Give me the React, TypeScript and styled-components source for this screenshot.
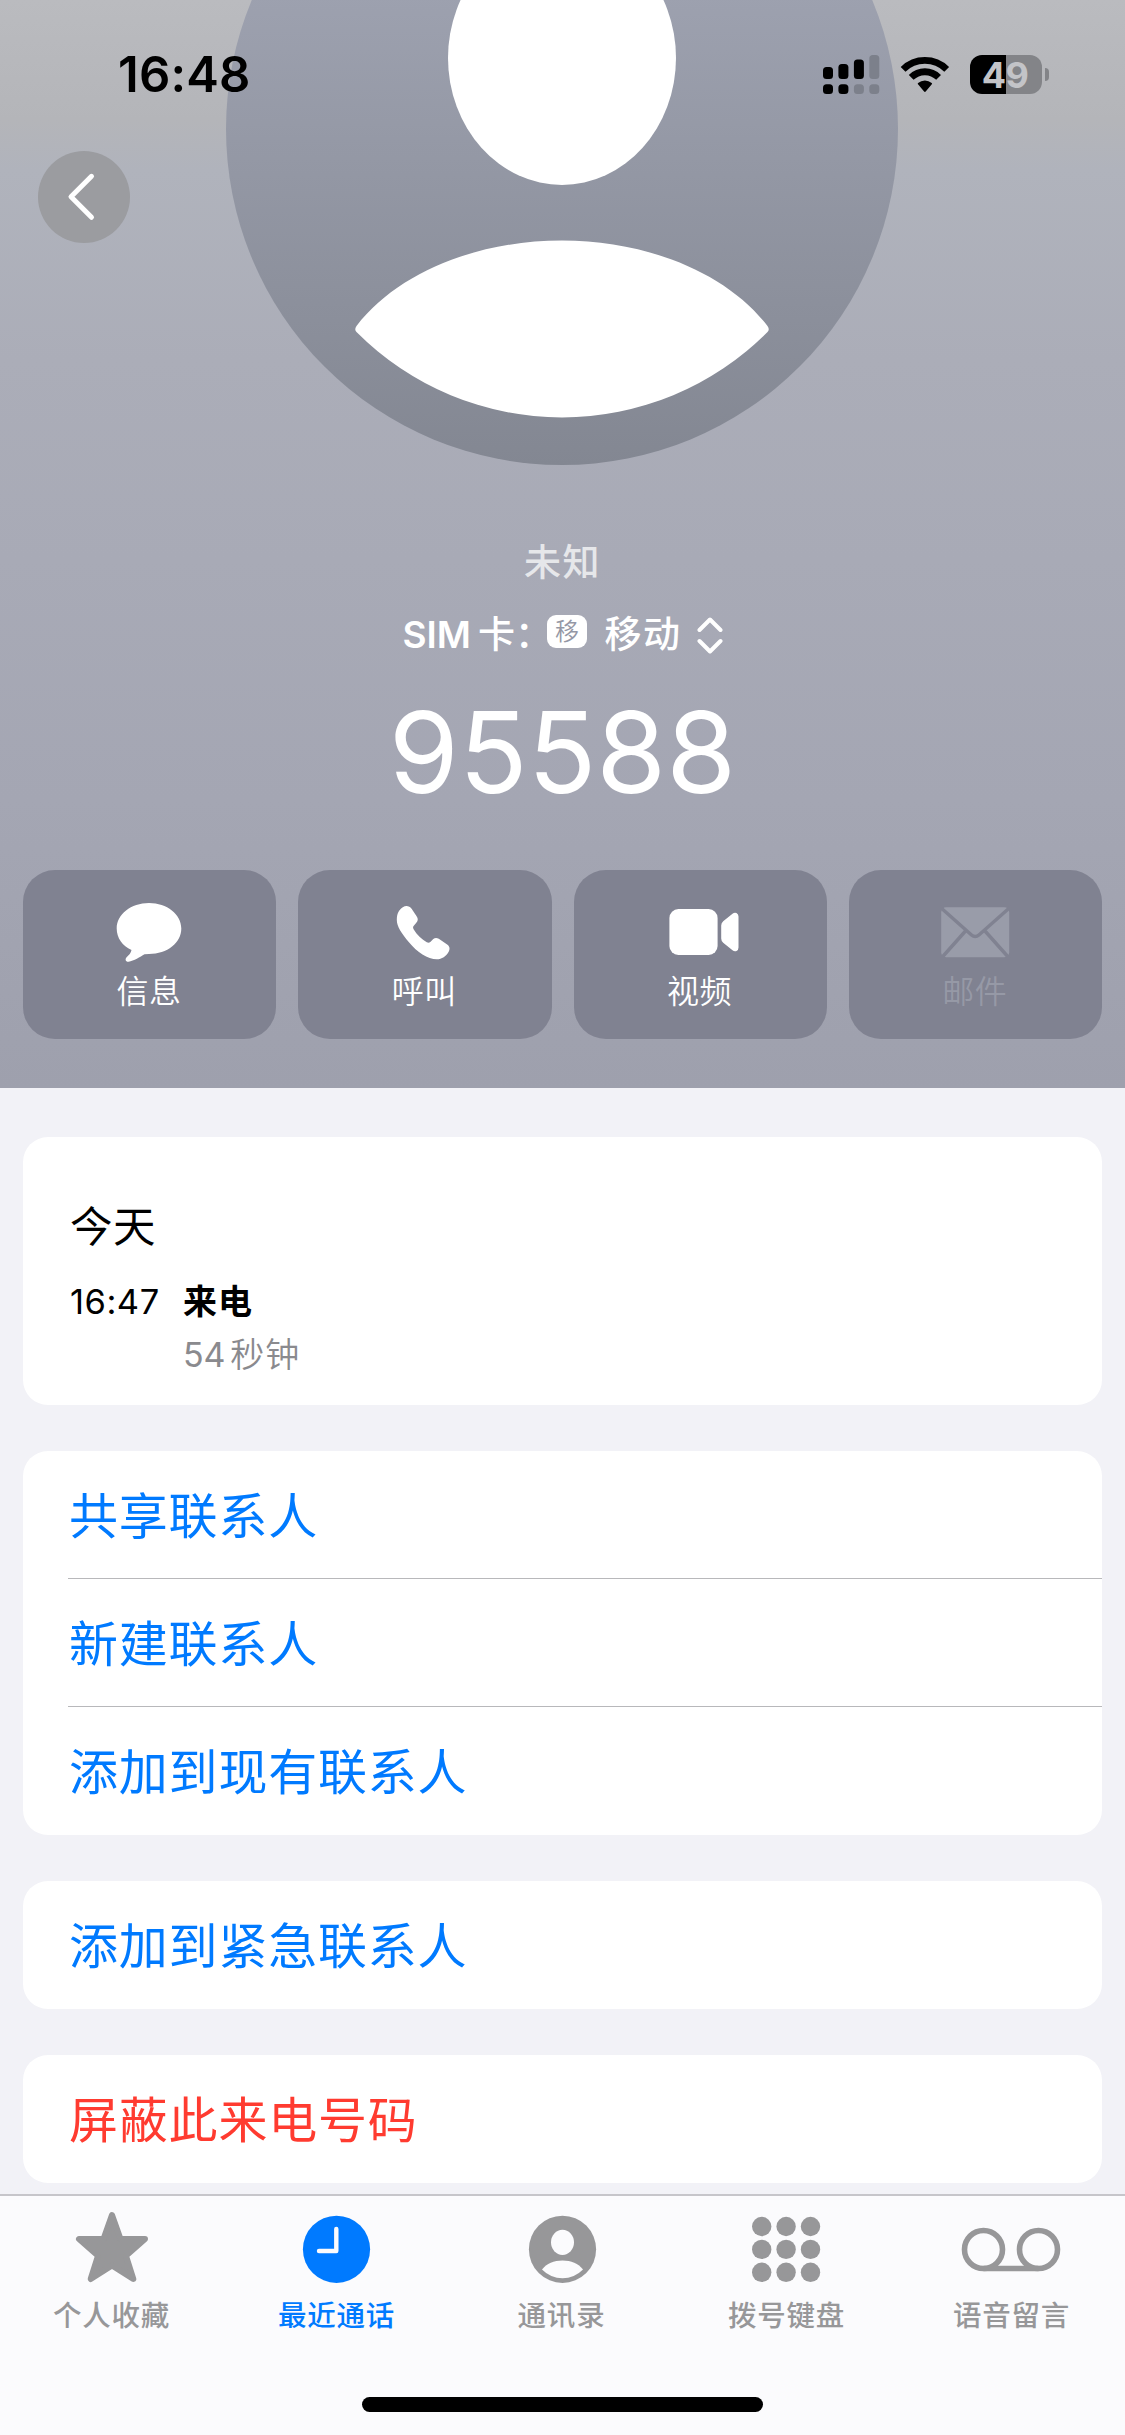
import React from "react";
import styled, { createGlobalStyle } from "styled-components";

const GlobalStyle = createGlobalStyle`
  *, *::before, *::after { box-sizing: border-box; }
  body {
    margin: 0;
    background: #f2f2f7;
    font-family: Inter, "Noto Sans CJK SC", sans-serif;
    -webkit-font-smoothing: antialiased;
  }
  button { font-family: inherit; border: 0; padding: 0; margin: 0; background: none; }
`;

const Screen = styled.div`
  width: 1125px;
  height: 2435px;
  display: flex;
  flex-direction: column;
  overflow: hidden;
  background: #f2f2f7;
`;

const Header = styled.header`
  position: relative;
  height: 1088px;
  flex: none;
  display: flex;
  flex-direction: column;
  overflow: hidden;
  background: linear-gradient(
    180deg,
    #babbbf 0,
    #b4b5b9 120px,
    #b0b3bc 170px,
    #abadb8 360px,
    #a8aab6 560px,
    #a4a6b3 800px,
    #9ea0ad 1088px
  );
`;

const Avatar = styled.svg`
  position: absolute;
  left: 226px;
  top: -207.5px;
  width: 672px;
  height: 672px;
`;

const StatusBar = styled.div`
  position: relative;
  height: 151px;
  padding: 0 76px 0 118px;
  display: flex;
  justify-content: space-between;
`;

const Clock = styled.span`
  margin-top: 45px;
  height: 60px;
  line-height: 60px;
  font-size: 49px;
  font-weight: 600;
  letter-spacing: 0.2px;
  color: #000;
`;

const Indicators = styled.div`
  display: flex;
  margin-top: 55px;
  height: 39px;
`;

const SignalIcon = styled.svg`
  width: 57px;
  height: 39px;
`;

const WifiIcon = styled.svg`
  width: 50px;
  height: 39px;
  margin-left: 20px;
`;

const Battery = styled.div`
  display: flex;
  align-items: center;
  gap: 3px;
  margin-left: 20px;
`;

const BatteryBody = styled.div<{ $level: number }>`
  width: 72px;
  height: 39px;
  padding-right: 2px;
  border-radius: 12px;
  background: linear-gradient(90deg, #000 ${(p) => p.$level}%, #838488 ${(p) => p.$level}%);
  color: #c3c4c8;
  font-size: 36px;
  font-weight: 700;
  line-height: 40px;
  text-align: center;
  letter-spacing: -0.5px;
`;

const BatteryTip = styled.div`
  width: 4px;
  height: 13px;
  border-radius: 0 5px 5px 0;
  background: #838488;
`;

const NavRow = styled.div`
  position: relative;
  height: 93px;
  padding-left: 37.5px;
`;

const BackButton = styled.button`
  width: 92px;
  height: 92px;
  border-radius: 50%;
  display: flex;
  align-items: center;
  justify-content: center;
  background: #9b9ca0;
`;

const Identity = styled.div`
  margin-top: 294px;
  display: flex;
  flex-direction: column;
  align-items: center;
`;

const Caption = styled.div`
  height: 50px;
  line-height: 50px;
  font-size: 37px;
  font-weight: 500;
  letter-spacing: 1.5px;
  color: #e6e7ea;
`;

const SimRow = styled.div`
  margin-top: 21px;
  height: 51px;
  display: flex;
  align-items: center;
  color: #fff;
  font-size: 37px;
  font-weight: 600;
  line-height: 50px;
`;

const SimLabel = styled.span`
  width: 144.5px;
  white-space: nowrap;
`;

const SimCard = styled.span`
  margin-left: 7px;
  font-size: 37px;
  font-weight: 500;
`;

const SimBadge = styled.span`
  width: 40px;
  height: 33px;
  margin-top: -7px;
  border-radius: 9px;
  background: #fff;
  color: #9497a5;
  font-size: 24px;
  font-weight: 350;
  line-height: 33px;
  text-align: center;
`;

const SimName = styled.span`
  margin-left: 17.5px;
  width: 92px;
  font-size: 37px;
  font-weight: 500;
  letter-spacing: 1.5px;
`;

const PhoneNumber = styled.div`
  margin-top: 32px;
  height: 120px;
  line-height: 120px;
  font-size: 113px;
  font-weight: 400;
  color: #fff;
`;

const Actions = styled.div`
  margin-top: 58px;
  padding: 0 23px;
  display: grid;
  grid-template-columns: repeat(4, 1fr);
  gap: 22px;
`;

const ActionButton = styled.button<{ $disabled?: boolean }>`
  height: 169px;
  border-radius: 32px;
  background: #808291;
  display: flex;
  flex-direction: column;
  align-items: center;
  color: ${(p) => (p.$disabled ? "#999ca9" : "#fff")};
`;

const ActionIcon = styled.svg`
  width: 74px;
  height: 64px;
  margin-top: 31px;
  margin-right: 1px;
  fill: currentColor;
`;

const ActionLabel = styled.span<{ $disabled?: boolean }>`
  height: 44px;
  margin-top: 5px;
  line-height: 44px;
  font-size: 32px;
  font-weight: 350;
  letter-spacing: 0.6px;
  padding-right: 1px;
  opacity: ${(p) => (p.$disabled ? 0.9 : 1)};
`;

const Content = styled.main`
  height: 1106px;
  flex: none;
  padding: 49px 23px 0;
  display: flex;
  flex-direction: column;
  gap: 46px;
  overflow: hidden;
`;

const Card = styled.section`
  flex: none;
  border-radius: 25px;
  background: #fff;
  overflow: hidden;
`;

const CallLog = styled(Card)`
  height: 268px;
  padding: 60px 47px 0;
  color: #000;
`;

const Day = styled.div`
  height: 60px;
  line-height: 60px;
  font-size: 42.5px;
  font-weight: 400;
  letter-spacing: 0.6px;
`;

const CallGrid = styled.div`
  margin-top: 18px;
  display: grid;
  grid-template-columns: 113px 1fr;
  grid-auto-rows: 53px;
  line-height: 53px;
  font-size: 34px;
`;

const CallTime = styled.span`
  font-size: 34.5px;
  letter-spacing: 0.5px;
`;

const CallKind = styled.span`
  font-weight: 700;
  letter-spacing: 1px;
`;

const CallLength = styled.span`
  grid-column: 2;
  display: flex;
  gap: 5px;
  font-weight: 350;
  letter-spacing: 1px;
  color: #8a8a8e;
`;

const Seconds = styled.span`
  font-weight: 400;
  letter-spacing: -0.2px;
`;

const Row = styled.button<{ $danger?: boolean }>`
  display: flex;
  align-items: center;
  width: 100%;
  height: 128px;
  padding: 0 0 5px 46px;
  font-size: 49px;
  font-weight: 400;
  letter-spacing: 0.8px;
  color: ${(p) => (p.$danger ? "#ff3b30" : "#007aff")};
`;

const Divider = styled.hr`
  height: 1px;
  margin: -1px 0 0 45px;
  border: 0;
  background: #b8b8bb;
`;

const TabBar = styled.nav`
  flex: 1;
  display: flex;
  flex-direction: column;
  align-items: center;
  justify-content: space-between;
  border-top: 2px solid #c6c5ca;
  background: #fbfbfd;
  padding-bottom: 23px;
`;

const Tabs = styled.div`
  width: 100%;
  display: grid;
  grid-template-columns: repeat(5, 1fr);
`;

const Tab = styled.button<{ $active?: boolean }>`
  display: flex;
  flex-direction: column;
  align-items: center;
  padding-right: 2px;
  color: ${(p) => (p.$active ? "#007aff" : "#979799")};
`;

const TabIcon = styled.svg`
  width: 104px;
  height: 80px;
  margin-top: 12px;
  fill: currentColor;
`;

const TabLabel = styled.span`
  height: 40px;
  margin-top: 8px;
  line-height: 40px;
  font-size: 28.5px;
  font-weight: 500;
  letter-spacing: 0.8px;
`;

const HomeIndicator = styled.div`
  width: 401px;
  height: 15px;
  border-radius: 8px;
  background: #000;
`;

const actions = [
  {
    label: "信息",
    icon: (
      <path d="M37 2C55 2 69.3 13.3 69.3 27.5C69.3 41.7 55.5 53 37 53Q34.5 53 32.5 53.3C28 56 22 60 16.5 60.8C13.5 61 12.8 58.3 14.6 56.3C17 54 19 52 19.5 49C10.500 45 4.7 37 4.7 27.5C4.7 13.3 19 2 37 2Z" />
    ),
  },
  {
    label: "呼叫",
    icon: (
      <path
        transform="translate(9.8 4.7)"
        d="M0 14C0 8 2 4 6 1.5C9 -.3 12.5 0 14.8 3L19.8 10.5C21.5 13 21.3 15 19.5 17L16.8 20.3C16 21.3 16.2 22.3 16.8 23.5C20 29 25 33.5 30 36.5C31.5 37.3 32.5 37 33.5 36.2L36.5 33.3C38 32 40 32 42 33L50 38.5C53 40.5 53.3 43 52 45.7C49.5 50.5 45 53.5 40 53.5C31 53.5 20 46 12.6 37C5 28 0 21 0 14Z"
      />
    ),
  },
  {
    label: "视频",
    icon: (
      <>
        <rect x="6.4" y="8" width="48.2" height="46" rx="9" />
        <path d="M58.2 24.5Q58.2 22 60.2 20.3L69.5 12.7Q71.5 11 73.5 12Q75.5 13 75.5 15.5V46.5Q75.5 49 73.5 50Q71.5 51 69.5 49.3L60.2 41.7Q58.2 40 58.2 37.5Z" />
      </>
    ),
  },
  {
    label: "邮件",
    disabled: true,
    icon: (
      <>
        <rect x="3.2" y="6.3" width="68" height="50" rx="5" />
        <path
          d="M1.5 5.5L33.5 34Q37.2 37.2 40.9 34L73 5.5M3 57.5L27.5 30M71.5 57.5L47 30"
          fill="none"
          stroke="#808291"
          strokeWidth="3.4"
        />
      </>
    ),
  },
];

const groups = [
  ["共享联系人", "新建联系人", "添加到现有联系人"],
  ["添加到紧急联系人"],
  ["屏蔽此来电号码"],
];

const dots = [0, 1, 2];

const tabs = [
  {
    label: "个人收藏",
    icon: (
      <path
        d="M52 7L60.5 31H85L66 47.8L73.300 71L52 57.5L30.7 71L38 47.8L19 31H43.5Z"
        stroke="currentColor"
        strokeWidth="6"
        strokeLinejoin="round"
      />
    ),
  },
  {
    label: "最近通话",
    active: true,
    icon: (
      <>
        <circle cx="51.5" cy="41.3" r="33.6" />
        <path d="M51.3 21V43H34" fill="none" stroke="#fbfbfd" strokeWidth="4.4" strokeLinecap="round" strokeLinejoin="round" />
      </>
    ),
  },
  {
    label: "通讯录",
    icon: (
      <>
        <circle cx="52.5" cy="41.3" r="33.6" />
        <ellipse cx="52.5" cy="34.3" rx="11.5" ry="12.6" fill="#fbfbfd" />
        <path d="M32 61.5C36.500 55.5 44 52.5 52.5 52.5S68.5 55.5 73 61.5A28.5 28.5 0 0 1 32 61.5Z" fill="#fbfbfd" />
      </>
    ),
  },
  {
    label: "拨号键盘",
    icon: dots.map((col) =>
      dots.map((row) => (
        <circle key={`${col}-${row}`} cx={26.7 + col * 24.4} cy={18.5 + row * 22.9} r="9.7" />
      )),
    ),
  },
  {
    label: "语音留言",
    icon: (
      <g fill="none" stroke="currentColor" strokeWidth="5.6">
        <circle cx="23.5" cy="41.5" r="19" />
        <circle cx="78.5" cy="41.5" r="19" />
        <path d="M23.5 60.5H78.5" />
      </g>
    ),
  },
];

export default function App() {
  return (
    <>
      <GlobalStyle />
      <Screen>
        <Header>
          <Avatar viewBox="0 0 672 672">
            <defs>
              <linearGradient id="disc" x1="0" y1="0" x2="0" y2="1">
                <stop offset="0.3" stopColor="#9da1af" />
                <stop offset="1" stopColor="#838792" />
              </linearGradient>
            </defs>
            <circle cx="336" cy="336" r="336" fill="url(#disc)" />
            <ellipse cx="336" cy="265" rx="114" ry="127" fill="#fff" />
            <path
              d="M130.5 533C172 479 252 447.5 336 447.500S500 479 541.5 533Q544 536.5 541.5 539A290 290 0 0 1 130.5 539Q128 536.5 130.5 533Z"
              fill="#fff"
            />
          </Avatar>

          <StatusBar>
            <Clock>16:48</Clock>
            <Indicators>
              <SignalIcon viewBox="0 0 57 39">
                <rect x="0" y="12" width="10" height="12" rx="3.5" />
                <rect x="15.4" y="9" width="10" height="15" rx="3.5" />
                <rect x="30.9" y="4.5" width="10" height="19.5" rx="3.5" />
                <rect x="46.3" y="0" width="10" height="24" rx="3.5" fill="#7c808b" />
                <rect x="0" y="29.3" width="10" height="9.7" rx="3.5" />
                <rect x="15.4" y="29.3" width="10" height="9.7" rx="3.5" />
                <rect x="30.9" y="29.3" width="10" height="9.7" rx="3.5" fill="#7c808b" />
                <rect x="46.3" y="29.3" width="10" height="9.7" rx="3.5" fill="#7c808b" />
              </SignalIcon>
              <WifiIcon viewBox="0 0 50 39">
                <g fill="none" stroke="#000" strokeWidth="6.8">
                  <path d="M3.1 14.3A31 31 0 0 1 46.7 14.3" />
                  <path d="M11.2 22.4A19.4 19.4 0 0 1 38.6 22.4" />
                </g>
                <path d="M18 29.3Q17.3 28.6 18.1 27.9A10.5 10.5 0 0 1 31.7 27.9Q32.5 28.6 31.8 29.3L25.7 36.5Q24.9 37.3 24.1 36.5Z" />
              </WifiIcon>
              <Battery>
                <BatteryBody $level={49.5}>49</BatteryBody>
                <BatteryTip />
              </Battery>
            </Indicators>
          </StatusBar>

          <NavRow>
            <BackButton aria-label="返回">
              <svg width="92" height="92" viewBox="0 0 92 92">
                <path
                  d="M53.5 25.3L33 45.8L53.5 66.3"
                  fill="none"
                  stroke="#fff"
                  strokeWidth="5"
                  strokeLinecap="round"
                  strokeLinejoin="round"
                />
              </svg>
            </BackButton>
          </NavRow>

          <Identity>
            <Caption>未知</Caption>
            <SimRow>
              <SimLabel>
                SIM<SimCard>卡：</SimCard>
              </SimLabel>
              <SimBadge>移</SimBadge>
              <SimName>移动</SimName>
              <svg width="26" height="38" viewBox="0 0 26 38">
                <path
                  d="M2.5 14L13 3.5L23.5 14M2.5 25L13 35.5L23.5 25"
                  fill="none"
                  stroke="#fff"
                  strokeWidth="4"
                  strokeLinecap="round"
                  strokeLinejoin="round"
                />
              </svg>
            </SimRow>
            <PhoneNumber>95588</PhoneNumber>
          </Identity>

          <Actions>
            {actions.map((a) => (
              <ActionButton key={a.label} $disabled={a.disabled}>
                <ActionIcon viewBox="0 0 74 64" overflow="visible">
                  {a.icon}
                </ActionIcon>
                <ActionLabel $disabled={a.disabled}>{a.label}</ActionLabel>
              </ActionButton>
            ))}
          </Actions>
        </Header>

        <Content>
          <CallLog>
            <Day>今天</Day>
            <CallGrid>
              <CallTime>16:47</CallTime>
              <CallKind>来电</CallKind>
              <CallLength>
                <Seconds>54</Seconds>
                <span>秒钟</span>
              </CallLength>
            </CallGrid>
          </CallLog>
          {groups.map((rows, g) => (
            <Card key={g}>
              {rows.map((text, i) => (
                <React.Fragment key={text}>
                  {i > 0 && <Divider />}
                  <Row $danger={g === 2}>{text}</Row>
                </React.Fragment>
              ))}
            </Card>
          ))}
        </Content>

        <TabBar>
          <Tabs>
            {tabs.map((t) => (
              <Tab key={t.label} $active={t.active}>
                <TabIcon viewBox="0 0 104 80">{t.icon}</TabIcon>
                <TabLabel>{t.label}</TabLabel>
              </Tab>
            ))}
          </Tabs>
          <HomeIndicator />
        </TabBar>
      </Screen>
    </>
  );
}
